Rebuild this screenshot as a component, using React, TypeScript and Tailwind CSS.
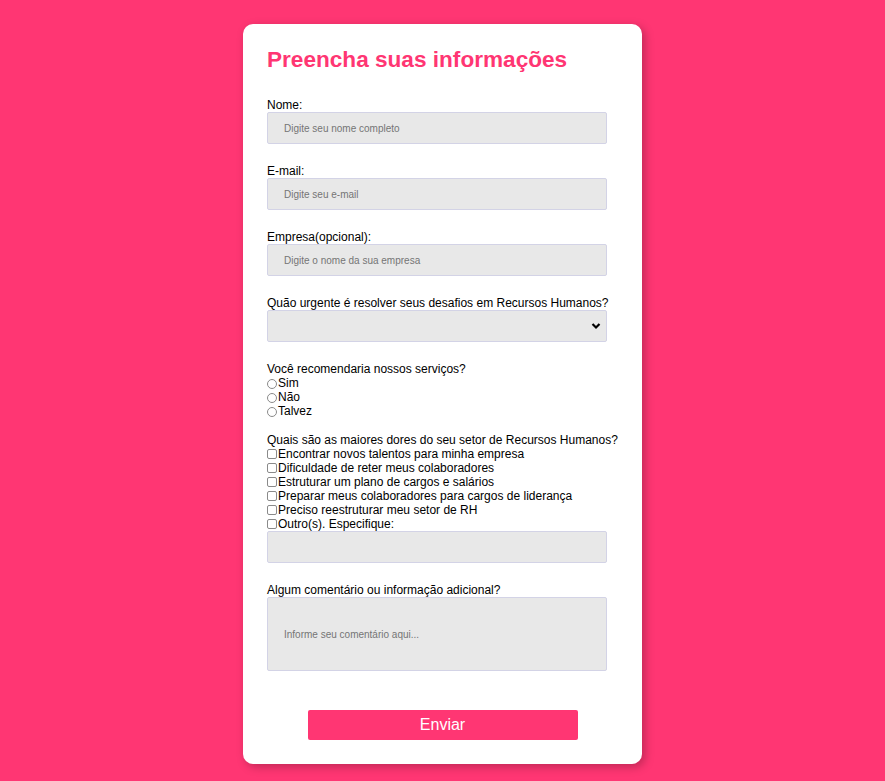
import React from "react";

const dores = [
  "Encontrar novos talentos para minha empresa",
  "Dificuldade de reter meus colaboradores",
  "Estruturar um plano de cargos e salários",
  "Preparar meus colaboradores para cargos de liderança",
  "Preciso reestruturar meu setor de RH",
];

const fieldClass =
  "block w-[340px] h-8 px-4 bg-[#e8e8e8] border border-[#d3d3e6] rounded-[2px] text-[10px] text-black placeholder:text-[#757575] outline-none";

const Label = ({ children }: { children: React.ReactNode }) => (
  <label className="block text-[12px] leading-[14px] text-black">{children}</label>
);

const Radio = ({ label }: { label: string }) => (
  <label className="flex items-center h-[14px] text-[12px] leading-[14px] text-black">
    <span className="w-[10px] h-[10px] mt-[2px] rounded-full border border-[#8a8a8a] bg-white shrink-0" />
    <span className="ml-px">{label}</span>
  </label>
);

const Check = ({ label }: { label: string }) => (
  <label className="flex items-center h-[14px] text-[12px] leading-[14px] text-black">
    <span className="w-[10px] h-[10px] rounded-[2px] border border-[#8a8a8a] bg-white shrink-0" />
    <span className="ml-px">{label}</span>
  </label>
);

export default function App() {
  return (
    <div className="min-h-[781px] bg-[#ff3673] pt-6 pb-4 font-['Liberation_Sans',Arial,sans-serif]">
      <form className="w-[399px] mx-auto bg-white rounded-[10px] px-6 pt-[23px] pb-6 shadow-[3px_3px_10px_rgba(0,0,0,0.25)]">
        <h1 className="text-[22.6px] leading-[26px] font-bold text-[#ff3673] mb-[25px]">
          Preencha suas informações
        </h1>

        <div className="mb-5">
          <Label>Nome:</Label>
          <input className={fieldClass} placeholder="Digite seu nome completo" />
        </div>

        <div className="mb-5">
          <Label>E-mail:</Label>
          <input className={fieldClass} placeholder="Digite seu e-mail" />
        </div>

        <div className="mb-5">
          <Label>Empresa(opcional):</Label>
          <input className={fieldClass} placeholder="Digite o nome da sua empresa" />
        </div>

        <div className="mb-5">
          <Label>Quão urgente é resolver seus desafios em Recursos Humanos?</Label>
          <div className="relative w-[340px]">
            <select className={fieldClass + " appearance-none"} defaultValue="">
              <option value=""></option>
              <option>Muito urgente</option>
              <option>Pouco urgente</option>
            </select>
            <svg
              className="absolute right-[6px] top-[12px] pointer-events-none"
              width="10"
              height="8"
              viewBox="0 0 10 8"
            >
              <polyline points="1.5,2 5,5.5 8.5,2" fill="none" stroke="#000" strokeWidth="2.2" />
            </svg>
          </div>
        </div>

        <div className="mb-[15px]">
          <Label>Você recomendaria nossos serviços?</Label>
          <Radio label="Sim" />
          <Radio label="Não" />
          <Radio label="Talvez" />
        </div>

        <div className="mb-5">
          <Label>Quais são as maiores dores do seu setor de Recursos Humanos?</Label>
          {dores.map((d) => (
            <Check key={d} label={d} />
          ))}
          <Check label="Outro(s). Especifique:" />
          <input className={fieldClass} />
        </div>

        <div className="mb-[39px]">
          <Label>Algum comentário ou informação adicional?</Label>
          <textarea
            className="block w-[340px] h-[74px] px-4 pt-[30px] bg-[#e8e8e8] border border-[#d3d3e6] rounded-[2px] text-[10px] leading-[13px] placeholder:text-[#757575] outline-none resize-none"
            placeholder="Informe seu comentário aqui..."
          />
        </div>

        <div className="flex justify-center">
          <button
            type="button"
            className="w-[270px] h-[30px] bg-[#ff3673] text-white text-[16px] rounded-[2px]"
          >
            Enviar
          </button>
        </div>
      </form>
    </div>
  );
}
